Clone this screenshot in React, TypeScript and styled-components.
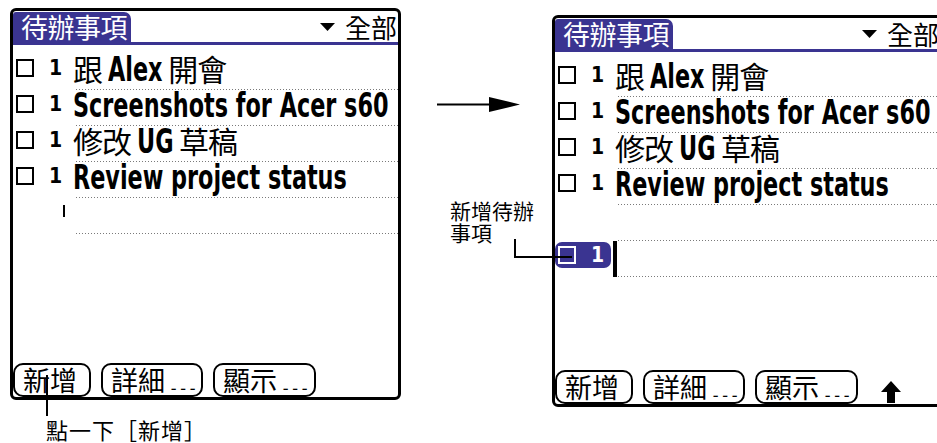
import React, { useLayoutEffect, useRef, useState } from "react";
import styled, { createGlobalStyle } from "styled-components";

const GlobalStyle = createGlobalStyle`
  html, body {
    margin: 0;
    padding: 0;
    background: #fff;
    overflow: hidden;
  }
`;

const BLUE = "#3a3491";
const CJK = `"Noto Sans CJK TC", "Noto Sans CJK SC", sans-serif`;
const LATIN = `"DejaVu Sans Condensed", "DejaVu Sans", sans-serif`;
// the palm bold font is much narrower than anything installed
const SQUEEZE = 0.73;

const Page = styled.div`
  position: relative;
  width: 937px;
  height: 443px;
  overflow: hidden;
  display: flex;
  align-items: flex-start;
  padding: 8px 0 0 10px;
  box-sizing: border-box;
`;

const LeftPane = styled.div`
  flex: none;
  width: 391px;
  display: flex;
  flex-direction: column;
`;

const MiddlePane = styled.div`
  flex: none;
  width: 151px;
  display: flex;
  flex-direction: column;
`;

const RightPane = styled.div`
  flex: none;
  margin-top: 7px;
`;

const Screen = styled.div`
  width: 391px;
  height: 392px;
  box-sizing: border-box;
  border: 3px solid #000;
  border-radius: 6px;
  display: flex;
  flex-direction: column;
  background: #fff;
  overflow: hidden;
`;

const Header = styled.div`
  display: flex;
  align-items: flex-end;
  justify-content: space-between;
  height: 34px;
  box-sizing: border-box;
  padding-top: 1px;
  border-bottom: 3px solid ${BLUE};
`;

const TitleTab = styled.div`
  background: ${BLUE};
  color: #fff;
  font-family: ${CJK};
  font-size: 27px;
  line-height: 30px;
  height: 30px;
  padding: 0 4px 0 8px;
  border-radius: 3px 7px 0 0;
  letter-spacing: -0.5px;
`;

const Filter = styled.div`
  display: flex;
  align-items: center;
  gap: 10px;
  font-family: ${CJK};
  font-size: 26px;
  line-height: 30px;
  height: 30px;
  padding-right: 1px;
`;

const List = styled.div`
  display: flex;
  flex-direction: column;
  padding-top: 9px;
`;

const Row = styled.div`
  display: flex;
  align-items: stretch;
  height: 36px;
`;

const Lead = styled.div<{ $selected?: boolean }>`
  flex: none;
  width: 56px;
  display: flex;
  align-items: flex-start;
  padding-left: 3px;
  box-sizing: border-box;
  color: ${(p) => (p.$selected ? "#fff" : "#000")};
  ${(p) =>
    p.$selected &&
    `
    background: ${BLUE};
    border-radius: 7px;
    height: 26px;
    margin-top: 1px;
  `}
`;

const Check = styled.span<{ $selected?: boolean }>`
  flex: none;
  width: 14px;
  height: 14px;
  margin-top: ${(p) => (p.$selected ? "4px" : "5px")};
  border: 2px solid ${(p) => (p.$selected ? "#fff" : "#000")};
`;

const Priority = styled.span<{ $selected?: boolean }>`
  font-family: ${LATIN};
  font-weight: bold;
  font-size: 21px;
  line-height: 18px;
  margin-top: ${(p) => (p.$selected ? "4px" : "5px")};
  margin-left: 15px;
`;

const Mark = styled.span`
  width: 2px;
  height: 12px;
  margin-top: 7px;
  margin-left: 47px;
  background: #000;
`;

const TextCell = styled.div`
  flex: 1;
  display: flex;
  align-items: center;
  margin-left: 4px;
  background-image: repeating-linear-gradient(to right, #7a7a7a 0 1px, transparent 1px 3px);
  background-size: 100% 1px;
  background-repeat: no-repeat;
  background-position: 3px bottom;
`;

const Line = styled.span`
  white-space: pre;
  line-height: 34px;
`;

const Cjk = styled.span`
  font-family: ${CJK};
  font-size: 30px;
  letter-spacing: -1px;
`;

const BoldBox = styled.span`
  display: inline-block;
  white-space: pre;
`;

const BoldInner = styled.span`
  display: inline-block;
  font-family: ${LATIN};
  font-weight: bold;
  font-size: 34px;
  transform: scaleX(${SQUEEZE});
  transform-origin: left center;
`;

const Cursor = styled.span`
  width: 4px;
  align-self: stretch;
  background: #000;
  margin-left: -2px;
`;

const Footer = styled.div`
  margin-top: auto;
  display: flex;
  align-items: flex-end;
  gap: 10px;
`;

const PalmButton = styled.div<{ $w: number }>`
  flex: none;
  width: ${(p) => p.$w}px;
  height: 34px;
  box-sizing: border-box;
  border: 2px solid #000;
  border-radius: 10px;
  display: flex;
  align-items: center;
  padding-left: 8px;
  font-family: ${CJK};
  font-size: 27px;
  line-height: 30px;
`;

const Dots = styled.span`
  display: inline-block;
  font-family: "DejaVu Sans", sans-serif;
  font-size: 11px;
  line-height: 11px;
  letter-spacing: -1px;
  margin: 0 0 3px 2px;
  align-self: flex-end;
  transform: scaleX(3.8);
  transform-origin: left;
`;

const UpArrow = styled.svg`
  flex: none;
  margin-left: 13px;
  margin-bottom: 1px;
`;

const Caption = styled.div`
  margin: 18px 0 0 36px;
  font-family: ${CJK};
  font-size: 22px;
  line-height: 22px;
  letter-spacing: 1px;
  white-space: nowrap;
`;

const FlowArrow = styled.svg`
  margin: 89px 0 0 36px;
`;

const NewLabel = styled.div`
  margin: 86px 0 0 49px;
  font-family: ${CJK};
  font-size: 21px;
  line-height: 22px;
  white-space: nowrap;
`;

const Leader = styled.div`
  position: absolute;
  border-color: #000;
  border-style: solid;
  border-width: 0;
`;

function Squeezed({ text }: { text: string }) {
  const ref = useRef<HTMLSpanElement>(null);
  const [w, setW] = useState<number>();
  useLayoutEffect(() => {
    if (ref.current) setW(ref.current.offsetWidth * SQUEEZE);
  }, [text]);
  return (
    <BoldBox style={w ? { width: w } : undefined}>
      <BoldInner ref={ref}>{text}</BoldInner>
    </BoldBox>
  );
}

type Seg = { t: string; latin?: boolean };

const todos: Seg[][] = [
  [{ t: "跟 " }, { t: "Alex", latin: true }, { t: " 開會" }],
  [{ t: "Screenshots for Acer s60", latin: true }],
  [{ t: "修改 " }, { t: "UG", latin: true }, { t: " 草稿" }],
  [{ t: "Review project status", latin: true }],
];

function TodoRow({ segs }: { segs: Seg[] }) {
  return (
    <Row>
      <Lead>
        <Check />
        <Priority>1</Priority>
      </Lead>
      <TextCell>
        <Line>
          {segs.map((s, i) => (s.latin ? <Squeezed key={i} text={s.t} /> : <Cjk key={i}>{s.t}</Cjk>))}
        </Line>
      </TextCell>
    </Row>
  );
}

function Buttons({ arrow }: { arrow?: boolean }) {
  return (
    <Footer>
      <PalmButton $w={78}>新增</PalmButton>
      <PalmButton $w={102}>
        詳細<Dots>...</Dots>
      </PalmButton>
      <PalmButton $w={103}>
        顯示<Dots>...</Dots>
      </PalmButton>
      {arrow && (
        <UpArrow width="20" height="22" viewBox="0 0 20 22">
          <path d="M10 0 L20 11 L14 11 L14 22 L6 22 L6 11 L0 11 Z" fill="#000" />
        </UpArrow>
      )}
    </Footer>
  );
}

function PalmScreen({ adding }: { adding?: boolean }) {
  return (
    <Screen>
      <Header>
        <TitleTab>待辦事項</TitleTab>
        <Filter>
          <svg width="15" height="8" viewBox="0 0 15 8">
            <path d="M0 0 H15 L7.5 8 Z" fill="#000" />
          </svg>
          全部
        </Filter>
      </Header>
      <List>
        {todos.map((segs, i) => (
          <TodoRow key={i} segs={segs} />
        ))}
        {adding ? (
          <>
            <Row>
              <Lead />
              <TextCell />
            </Row>
            <Row>
              <Lead $selected>
                <Check $selected />
                <Priority $selected>1</Priority>
              </Lead>
              <TextCell>
                <Cursor />
              </TextCell>
            </Row>
          </>
        ) : (
          <Row>
            <Lead>
              <Mark />
            </Lead>
            <TextCell />
          </Row>
        )}
      </List>
      <Buttons arrow={adding} />
    </Screen>
  );
}

export default function App() {
  return (
    <>
      <GlobalStyle />
      <Page>
        <LeftPane>
          <PalmScreen />
          <Caption>點一下［新增］</Caption>
        </LeftPane>
        <MiddlePane>
          <FlowArrow width="83" height="16" viewBox="0 0 83 16">
            <line x1="0" y1="7.5" x2="54" y2="7.5" stroke="#000" strokeWidth="2" />
            <path d="M52 0 L83 7.5 L52 15 Z" fill="#000" />
          </FlowArrow>
          <NewLabel>
            新增待辦
            <br />
            事項
          </NewLabel>
        </MiddlePane>
        <RightPane>
          <PalmScreen adding />
        </RightPane>
        <Leader style={{ left: 46, top: 375, width: 0, height: 41, borderLeftWidth: 2 }} />
        <Leader
          style={{ left: 514, top: 239, width: 56, height: 17, borderLeftWidth: 2, borderBottomWidth: 2 }}
        />
      </Page>
    </>
  );
}
